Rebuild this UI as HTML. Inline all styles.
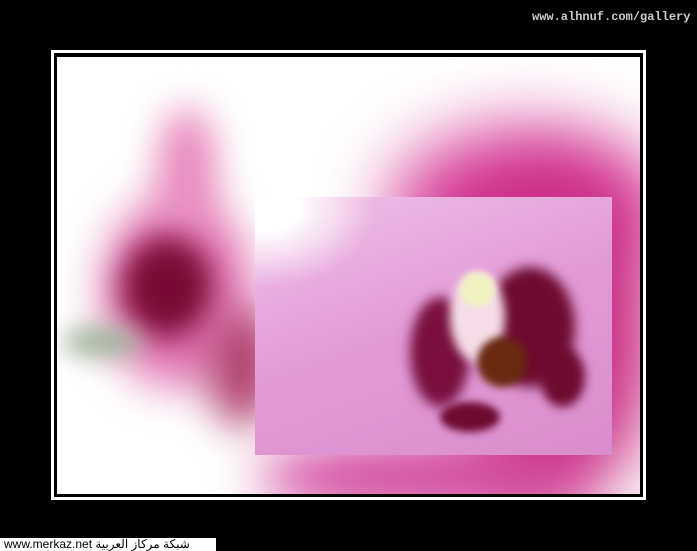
<!DOCTYPE html>
<html><head><style>
body{margin:0;width:697px;height:551px;background:#000;position:relative;overflow:hidden;font-family:"Liberation Mono",monospace}
.frame{position:absolute;left:51px;top:50px;width:589px;height:444px;border:3px solid #fff}
.img{position:absolute;left:57px;top:57px;width:583px;height:437px;background:#fff;overflow:hidden}
.b{position:absolute;border-radius:50%;filter:blur(18px)}
.ins{position:absolute;left:255px;top:197px;width:357px;height:258px;overflow:hidden;
background:radial-gradient(ellipse 110px 80px at 10px 10px,#fff 0,#fff 30%,rgba(255,255,255,0) 100%),linear-gradient(160deg,#f0c0e6,#e29ad6 50%,#d98ccc)}
.top{position:absolute;left:532px;top:10px;color:#ccc;font-size:12px;font-weight:bold}
.bot{position:absolute;left:0;top:538px;width:216px;height:13px;background:#fff;font:12px "Liberation Sans","Noto Sans CJK SC",sans-serif;color:#000;line-height:13px;padding-left:4px;box-sizing:border-box;white-space:nowrap}
</style></head><body>
<div class="top">www.alhnuf.com/gallery</div>
<div class="frame"></div>
<div class="img">
 <div class="b" style="left:330px;top:70px;width:280px;height:170px;background:#d8409a;filter:blur(35px)"></div>
 <div class="b" style="left:380px;top:110px;width:220px;height:340px;background:#c82880;filter:blur(35px)"></div>
 <div class="b" style="left:200px;top:385px;width:330px;height:70px;background:#d0409a;filter:blur(25px)"></div>
 <div class="b" style="left:45px;top:140px;width:150px;height:190px;background:#e070b0;filter:blur(22px)"></div>
 <div class="b" style="left:100px;top:50px;width:60px;height:130px;background:#e888bd;filter:blur(18px)"></div>
 <div class="b" style="left:65px;top:180px;width:90px;height:100px;background:#7a0a35;filter:blur(14px)"></div>
 <div class="b" style="left:5px;top:270px;width:80px;height:30px;background:#9fb59a;filter:blur(12px)"></div>
 <div class="b" style="left:150px;top:250px;width:70px;height:120px;background:#b04070;filter:blur(20px)"></div>
</div>
<div class="ins">
 <div class="b" style="left:230px;top:70px;width:90px;height:120px;background:#6d0a30;filter:blur(6px)"></div>
 <div class="b" style="left:155px;top:100px;width:60px;height:110px;background:#7a1040;filter:blur(6px)"></div>
 <div class="b" style="left:195px;top:75px;width:55px;height:90px;background:#f5dde8;filter:blur(5px)"></div>
 <div class="b" style="left:205px;top:75px;width:35px;height:35px;background:#f0f0c0;filter:blur(3px)"></div>
 <div class="b" style="left:222px;top:140px;width:50px;height:50px;background:#6a2a10;filter:blur(4px)"></div>
 <div class="b" style="left:185px;top:205px;width:60px;height:30px;background:#6d0a30;filter:blur(4px)"></div>
 <div class="b" style="left:285px;top:150px;width:45px;height:60px;background:#6d0a30;filter:blur(5px)"></div>
</div>
<div class="bot">www.merkaz.net <span dir="rtl">شبكة مركاز العربية</span></div>
</body></html>
